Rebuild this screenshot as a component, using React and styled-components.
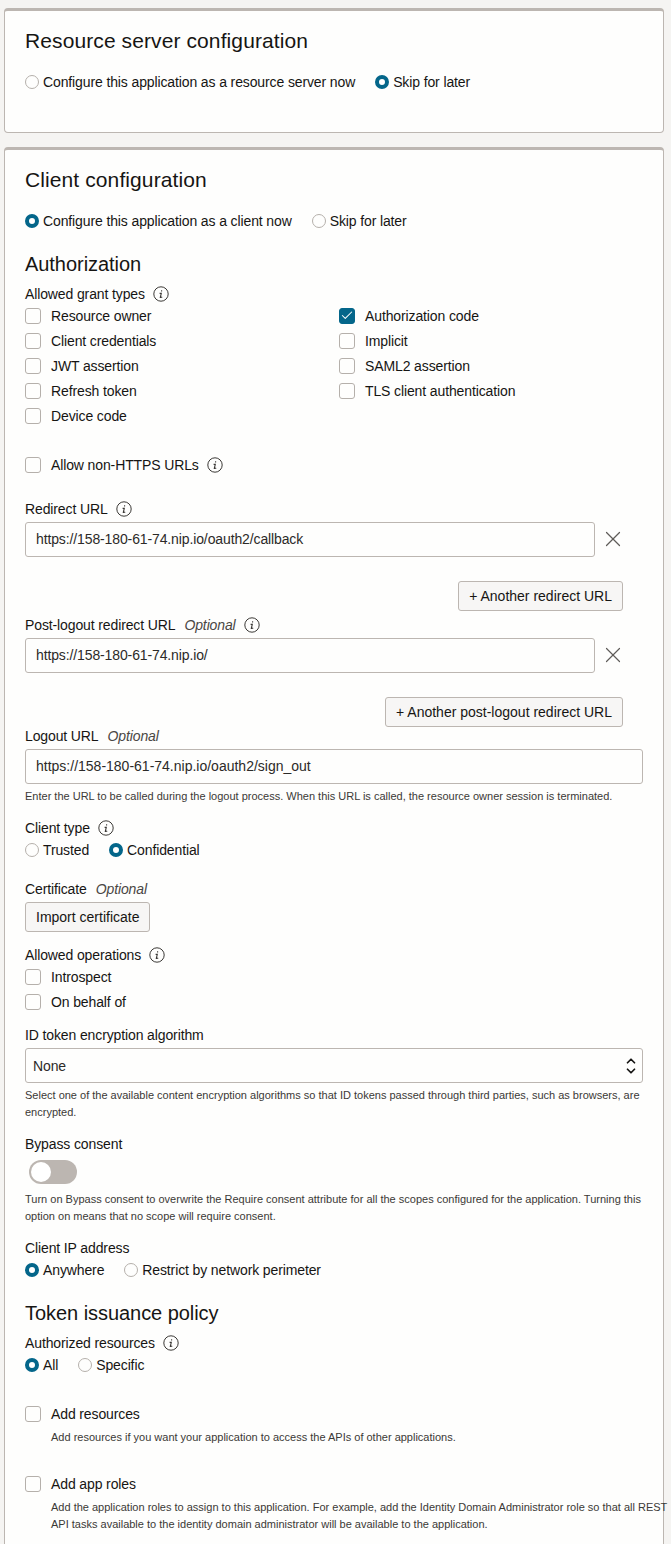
import styled, { createGlobalStyle } from 'styled-components';
import { X, ChevronUp, ChevronDown, Check } from 'lucide-react';

const GlobalStyle = createGlobalStyle`
  html, body {
    margin: 0;
    padding: 0;
    background: #f5f4f2;
    overflow: hidden;
  }
  body {
    height: 1544px;
    font-family: "Liberation Sans", Arial, sans-serif;
    font-size: 14px;
    letter-spacing: -0.12px;
    color: #161513;
  }
`;

const Page = styled.div`
  padding: 8px 7px 0 4px;
  height: 1536px;
  overflow: hidden;
  display: flex;
  flex-direction: column;
  gap: 14px;
`;

const Panel = styled.section`
  background: #fefefd;
  border: 1px solid #bcb6b1;
  border-top: 3px solid #bcb6b1;
  border-radius: 4px;
  padding: ${props => props.$top || 0}px 20px ${props => props.$bottom || 0}px;
  flex-shrink: 0;
`;

const Title = styled.h2`
  font-size: 21px;
  letter-spacing: 0.1px;
  font-weight: 400;
  line-height: 24px;
  margin: 0;
`;

const SubTitle = styled.h3`
  font-size: 20px;
  letter-spacing: -0.05px;
  font-weight: 400;
  line-height: 24px;
  margin: ${props => props.$mt || 0}px 0 0;
`;

const RadioRow = styled.div`
  display: flex;
  gap: 20px;
  height: 20px;
  align-items: center;
  margin-top: ${props => props.$mt || 0}px;
`;

const RadioItem = styled.label`
  display: flex;
  align-items: center;
  gap: 4px;
  line-height: 20px;
`;

const RadioDot = styled.span`
  box-sizing: border-box;
  width: 14px;
  height: 14px;
  border-radius: 50%;
  background: ${props => (props.$on ? '#fff' : '#fefefd')};
  border: ${props => (props.$on ? '4.5px solid #04668a' : '1px solid #b5b0ab')};
`;

const Label = styled.div`
  display: flex;
  align-items: center;
  line-height: 20px;
  height: 20px;
  margin-top: ${props => props.$mt || 0}px;
`;

const Optional = styled.em`
  margin-left: 9px;
  font-style: italic;
  color: #4a4744;
`;

const InfoMark = styled.svg`
  width: 16px;
  height: 16px;
  margin-left: 8px;
  flex-shrink: 0;
`;

const GrantGrid = styled.div`
  display: grid;
  grid-template-columns: 314px 1fr;
  grid-template-rows: repeat(5, 25px);
  margin-top: -1px;
`;

const CheckItem = styled.label`
  display: flex;
  align-items: center;
  gap: 10px;
  height: 25px;
  line-height: 20px;
  margin-top: ${props => props.$mt || 0}px;
`;

const CheckText = styled.span`
  display: flex;
  align-items: center;
`;

const Box = styled.span`
  box-sizing: border-box;
  width: 16px;
  height: 16px;
  border-radius: 3px;
  display: flex;
  align-items: center;
  justify-content: center;
  background: ${props => (props.$on ? '#04668a' : '#fefefd')};
  border: 1px solid ${props => (props.$on ? '#04668a' : '#b5b0ab')};
  color: #fff;
`;

const InputRow = styled.div`
  display: flex;
  align-items: center;
  margin-top: ${props => props.$mt || 0}px;
`;

const TextInput = styled.div`
  box-sizing: border-box;
  width: ${props => props.$width}px;
  height: 35px;
  border: 1px solid #bcb6b1;
  border-radius: 3px;
  background: #fefefd;
  padding: 0 10px 2px;
  display: flex;
  align-items: center;
  color: #2c2a28;
  letter-spacing: ${props => (props.$wide ? '0' : '-0.12px')};
`;

const SelectBox = styled(TextInput)`
  padding: 0 4px 0 7px;
  justify-content: space-between;
`;

const Chevrons = styled.span`
  display: flex;
  flex-direction: column;
  color: #161513;
  line-height: 0;
  gap: 0;

  svg + svg {
    margin-top: -4px;
  }
`;

const ClearIcon = styled(X)`
  margin: -2px 0 0 5px;
  color: #5f5c59;
`;

const ButtonRow = styled.div`
  display: flex;
  justify-content: flex-end;
  width: 598px;
  margin-top: ${props => props.$mt || 0}px;
`;

const Button = styled.button`
  box-sizing: border-box;
  height: 30px;
  padding: 0 10px;
  font: inherit;
  letter-spacing: 0;
  line-height: 28px;
  color: #161513;
  background: #f7f6f5;
  border: 1px solid #bcb6b1;
  border-radius: 3px;
  margin-top: ${props => props.$mt || 0}px;
  display: block;
`;

const Hint = styled.p`
  font-size: 11px;
  letter-spacing: 0;
  line-height: 17px;
  margin: ${props => props.$mt || 0}px ${props => (props.$indent ? -30 : 0)}px 0 0;
  padding-left: ${props => props.$indent || 0}px;
  color: #3b3936;
`;

const Toggle = styled.span`
  display: block;
  box-sizing: border-box;
  width: 48px;
  height: 24px;
  border-radius: 12px;
  background: #bcb6b1;
  padding: 2px;
  margin: 6px 0 0 4px;
`;

const Knob = styled.span`
  display: block;
  width: 20px;
  height: 20px;
  border-radius: 50%;
  background: #fff;
`;

const Info = () => (
  <InfoMark viewBox="0 0 16 16" fill="none">
    <circle cx="8" cy="8" r="7.2" stroke="#3b3936" strokeWidth="1" />
    <path d="M8.6 4.2v1.4M6.6 7.4h1.7L7.3 11.4c.8.1 1.4-.1 1.9-.6" stroke="#3b3936" strokeWidth="1.1" />
  </InfoMark>
);

const Radio = ({ on, children }) => (
  <RadioItem>
    <RadioDot $on={on} />
    {children}
  </RadioItem>
);

const Checkbox = ({ on, mt, children }) => (
  <CheckItem $mt={mt}>
    <Box $on={on}>{on && <Check size={15} strokeWidth={1.8} />}</Box>
    <CheckText>{children}</CheckText>
  </CheckItem>
);

const grants = [
  ['Resource owner', false],
  ['Authorization code', true],
  ['Client credentials', false],
  ['Implicit', false],
  ['JWT assertion', false],
  ['SAML2 assertion', false],
  ['Refresh token', false],
  ['TLS client authentication', false],
  ['Device code', false],
];

export default function App() {
  return (
    <>
      <GlobalStyle />
      <Page>
        <Panel $top={18} $bottom={40}>
          <Title>Resource server configuration</Title>
          <RadioRow $mt={19}>
            <Radio>Configure this application as a resource server now</Radio>
            <Radio on>Skip for later</Radio>
          </RadioRow>
        </Panel>

        <Panel $top={18} $bottom={40}>
          <Title>Client configuration</Title>
          <RadioRow $mt={19}>
            <Radio on>Configure this application as a client now</Radio>
            <Radio>Skip for later</Radio>
          </RadioRow>
          <SubTitle $mt={21}>Authorization</SubTitle>
          <Label $mt={8}>Allowed grant types<Info /></Label>
          <GrantGrid>
            {grants.map(([name, on]) => (
              <Checkbox key={name} on={on}>{name}</Checkbox>
            ))}
          </GrantGrid>
          <Checkbox mt={24}>Allow non-HTTPS URLs<Info /></Checkbox>

          <Label $mt={22}>Redirect URL<Info /></Label>
          <InputRow $mt={3}>
            <TextInput $width={570}>https://158-180-61-74.nip.io/oauth2/callback</TextInput>
            <ClearIcon size={26} strokeWidth={1.1} />
          </InputRow>
          <ButtonRow $mt={24}><Button>+ Another redirect URL</Button></ButtonRow>

          <Label $mt={4}>Post-logout redirect URL<Optional>Optional</Optional><Info /></Label>
          <InputRow $mt={3}>
            <TextInput $width={570}>https://158-180-61-74.nip.io/</TextInput>
            <ClearIcon size={26} strokeWidth={1.1} />
          </InputRow>
          <ButtonRow $mt={24}><Button>+ Another post-logout redirect URL</Button></ButtonRow>

          <Label $mt={-1}>Logout URL<Optional>Optional</Optional></Label>
          <InputRow $mt={3}>
            <TextInput $width={618} $wide>https://158-180-61-74.nip.io/oauth2/sign_out</TextInput>
          </InputRow>
          <Hint $mt={4}>Enter the URL to be called during the logout process. When this URL is called, the resource owner session is terminated.</Hint>

          <Label $mt={13}>Client type<Info /></Label>
          <RadioRow $mt={2}>
            <Radio>Trusted</Radio>
            <Radio on>Confidential</Radio>
          </RadioRow>

          <Label $mt={19}>Certificate<Optional>Optional</Optional></Label>
          <Button $mt={3}>Import certificate</Button>

          <Label $mt={13}>Allowed operations<Info /></Label>
          <Checkbox mt={-1}>Introspect</Checkbox>
          <Checkbox>On behalf of</Checkbox>

          <Label $mt={11}>ID token encryption algorithm</Label>
          <InputRow $mt={3}>
            <SelectBox $width={618}>
              None
              <Chevrons>
                <ChevronUp size={14} strokeWidth={3} />
                <ChevronDown size={14} strokeWidth={3} />
              </Chevrons>
            </SelectBox>
          </InputRow>
          <Hint $mt={4}>Select one of the available content encryption algorithms so that ID tokens passed through third parties, such as browsers, are encrypted.</Hint>

          <Label $mt={13}>Bypass consent</Label>
          <Toggle><Knob /></Toggle>
          <Hint $mt={7}>Turn on Bypass consent to overwrite the Require consent attribute for all the scopes configured for the application. Turning this option on means that no scope will require consent.</Hint>

          <Label $mt={13}>Client IP address</Label>
          <RadioRow $mt={2}>
            <Radio on>Anywhere</Radio>
            <Radio>Restrict by network perimeter</Radio>
          </RadioRow>

          <SubTitle $mt={21}>Token issuance policy</SubTitle>
          <Label $mt={8}>Authorized resources<Info /></Label>
          <RadioRow $mt={2}>
            <Radio on>All</Radio>
            <Radio>Specific</Radio>
          </RadioRow>

          <Checkbox mt={26}>Add resources</Checkbox>
          <Hint $mt={3} $indent={26}>Add resources if you want your application to access the APIs of other applications.</Hint>

          <Checkbox mt={25}>Add app roles</Checkbox>
          <Hint $mt={3} $indent={26}>Add the application roles to assign to this application. For example, add the Identity Domain Administrator role so that all REST API tasks available to the identity domain administrator will be available to the application.</Hint>
        </Panel>
      </Page>
    </>
  );
}
